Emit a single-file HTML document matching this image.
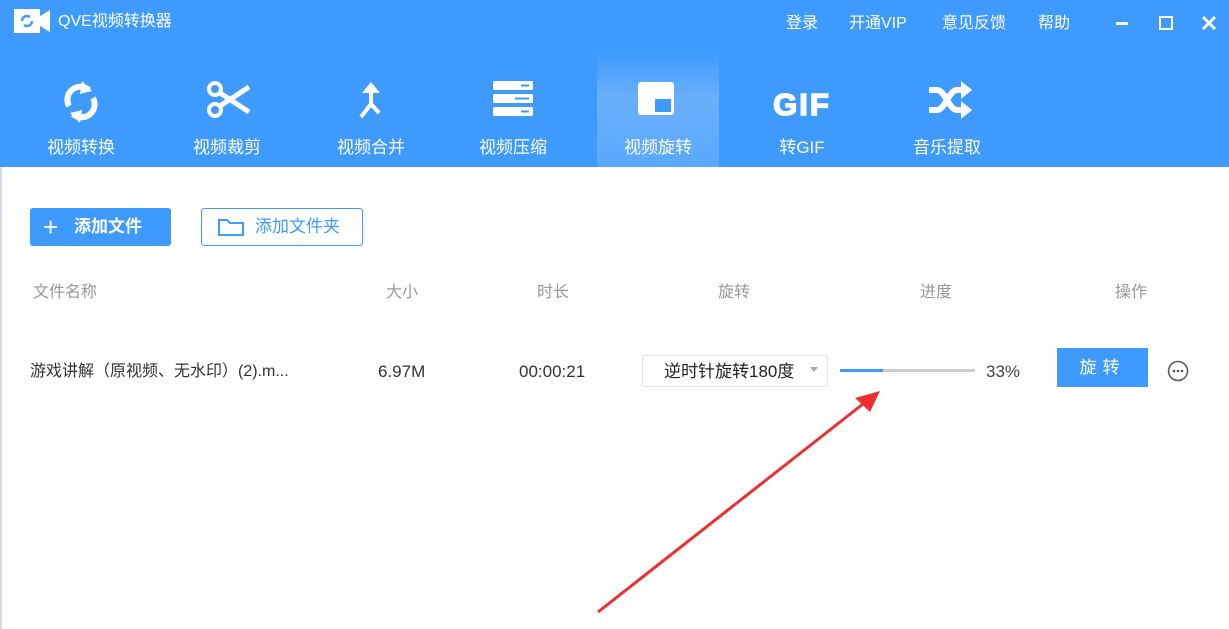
<!DOCTYPE html>
<html><head><meta charset="utf-8"><style>
body{margin:0;width:1229px;height:629px;overflow:hidden;background:#fff;font-family:"Liberation Sans","Noto Sans CJK SC",sans-serif;position:relative}
div{line-height:20px}
.hdr{position:absolute;left:0;top:0;width:1229px;height:167px;background:#3e9bfd}
.t{position:absolute;color:#fff;font-size:16px;white-space:nowrap}
.tab{position:absolute;top:52px;width:122px;height:115px;text-align:center;color:#fff;font-size:17px}
.tab svg{position:absolute;left:41px;top:28px}
.tab span{position:absolute;left:0;right:0;top:86px;line-height:20px}
.sel{background:linear-gradient(#3e9bfd,#6aaffb 40%,#5aa8fc)}
.g{position:absolute;color:#999;font-size:16px}
.d{position:absolute;color:#333;font-size:16px;white-space:nowrap}
</style></head><body>
<div class="hdr"></div>
<div style="position:absolute;left:0;top:167px;width:2px;height:462px;background:#d4dbe3"></div>
<svg style="position:absolute;left:14px;top:9px" width="36" height="24"><rect x="0" y="0" width="26" height="24" fill="#fff"/><path d="M26 7 L36 1 V23 L26 17Z" fill="#fff"/><path d="M8 12a5 5 0 0 1 8-4 M18 12a5 5 0 0 1-8 4" stroke="#3e9bfd" stroke-width="2.5" fill="none"/></svg>
<div class="t" style="left:58px;top:12px">QVE视频转换器</div>
<div class="t" style="left:786px;top:14px">登录</div>
<div class="t" style="left:849px;top:14px">开通VIP</div>
<div class="t" style="left:942px;top:14px">意见反馈</div>
<div class="t" style="left:1038px;top:14px">帮助</div>
<div style="position:absolute;left:1116px;top:22px;width:12px;height:3px;background:#fff"></div>
<div style="position:absolute;left:1159px;top:16px;width:10px;height:10px;border:2px solid #fff"></div>
<svg style="position:absolute;left:1201px;top:15px" width="16" height="16"><path d="M2 2L14 14M14 2L2 14" stroke="#fff" stroke-width="3"/></svg>

<div class="tab" style="left:20px"><svg width="40" height="44" viewBox="0 0 40 44"><path d="M8 26a13 13 0 0 1 20-16" stroke="#fff" stroke-width="6" fill="none"/><path d="M21 1l10 10-12 3z" fill="#fff"/><path d="M32 18a13 13 0 0 1-20 16" stroke="#fff" stroke-width="6" fill="none"/><path d="M19 43l-10-10 12-3z" fill="#fff"/></svg><span>视频转换</span></div>
<div class="tab" style="left:166px"><svg width="46" height="40" viewBox="0 0 46 40"><circle cx="8" cy="9" r="6" stroke="#fff" stroke-width="4" fill="none"/><circle cx="8" cy="30" r="6" stroke="#fff" stroke-width="4" fill="none"/><path d="M13 13L42 32 M13 26L42 7" stroke="#fff" stroke-width="5" fill="none"/></svg><span>视频裁剪</span></div>
<div class="tab" style="left:310px"><svg width="40" height="44" viewBox="0 0 40 44"><path d="M20 2L11 13H29Z" fill="#fff"/><path d="M20 10V24L10 37 M20 24L28 33" stroke="#fff" stroke-width="4" fill="none"/></svg><span>视频合并</span></div>
<div class="tab" style="left:452px"><svg width="44" height="40" viewBox="0 0 44 40"><rect x="0" y="1" width="40" height="9" rx="1.5" fill="#fff"/><rect x="0" y="14" width="40" height="9" rx="1.5" fill="#fff"/><rect x="0" y="27" width="40" height="9" rx="1.5" fill="#fff"/><path d="M28 5.5h8M22 18.5h14M28 31.5h8" stroke="#3e9bfd" stroke-width="2"/></svg><span>视频压缩</span></div>
<div class="tab sel" style="left:597px"><svg width="44" height="40" viewBox="0 0 44 40"><rect x="0" y="2" width="36" height="33" rx="3" fill="#fff"/><rect x="17" y="19" width="16" height="13" fill="#3e9bfd"/></svg><span>视频旋转</span></div>
<div class="tab" style="left:741px"><div style="position:absolute;left:0;right:0;top:37px;font-size:31px;line-height:32px;font-weight:900;-webkit-text-stroke:1.5px #fff;letter-spacing:2px">GIF</div><span>转GIF</span></div>
<div class="tab" style="left:886px"><svg width="48" height="40" viewBox="0 0 48 40"><path d="M2 10h8c8 0 12 20 20 20h6 M2 30h8c8 0 12-20 20-20h6" stroke="#fff" stroke-width="6" fill="none"/><path d="M34 1l11 9-11 9z M34 21l11 9-11 9z" fill="#fff"/></svg><span>音乐提取</span></div>

<div style="position:absolute;left:30px;top:208px;width:141px;height:38px;background:#3e9bfd;border-radius:3px;color:#fff;font-size:17px;font-weight:bold;line-height:38px"><span style="position:absolute;left:13px;font-size:26px;font-weight:normal">+</span><span style="position:absolute;left:44px">添加文件</span></div>
<div style="position:absolute;left:201px;top:208px;width:160px;height:36px;border:1px solid #3e9bfd;border-radius:3px;color:#3e9bfd;font-size:17px;line-height:36px"><svg style="position:absolute;left:15px;top:9px" width="28" height="20"><path d="M2 2h8l3 3h13v12H2z" stroke="#3e9bfd" stroke-width="2" fill="none"/></svg><span style="position:absolute;left:53px">添加文件夹</span></div>

<div class="g" style="left:33px;top:283px">文件名称</div>
<div class="g" style="left:386px;top:283px">大小</div>
<div class="g" style="left:537px;top:283px">时长</div>
<div class="g" style="left:718px;top:283px">旋转</div>
<div class="g" style="left:920px;top:283px">进度</div>
<div class="g" style="left:1115px;top:283px">操作</div>

<div class="d" style="left:30px;top:362px">游戏讲解（原视频、无水印）(2).m...</div>
<div class="d" style="left:378px;top:362px;font-size:17px">6.97M</div>
<div class="d" style="left:519px;top:362px;font-size:17px">00:00:21</div>
<div style="position:absolute;left:642px;top:355px;width:184px;height:30px;border:1px solid #e3e3e3;border-radius:2px"></div>
<div class="d" style="left:664px;top:362px;font-size:17px;color:#222">逆时针旋转180度</div>
<div style="position:absolute;left:810px;top:367px;border:4px solid transparent;border-top:5px solid #aaa"></div>
<div style="position:absolute;left:840px;top:369px;width:135px;height:3px;background:#ccc"></div>
<div style="position:absolute;left:840px;top:369px;width:43px;height:3px;background:#3e9bfd"></div>
<div class="d" style="left:986px;top:362px;color:#444;font-size:17px">33%</div>
<div style="position:absolute;left:1057px;top:348px;width:91px;height:39px;background:#3e9bfd;color:#fff;font-size:17px;text-align:center;line-height:39px;letter-spacing:6px">旋转</div>
<svg style="position:absolute;left:1167px;top:360px" width="22" height="22"><circle cx="11" cy="11" r="9.5" stroke="#555" stroke-width="1.5" fill="none"/><circle cx="7" cy="11" r="1.3" fill="#555"/><circle cx="11" cy="11" r="1.3" fill="#555"/><circle cx="15" cy="11" r="1.3" fill="#555"/></svg>

<svg style="position:absolute;left:0;top:0" width="1229" height="629"><path d="M598 612L868 400" stroke="#ec2f2f" stroke-width="3"/><path d="M880 391L855 398L870 412Z" fill="#ec2f2f"/></svg>
</body></html>
